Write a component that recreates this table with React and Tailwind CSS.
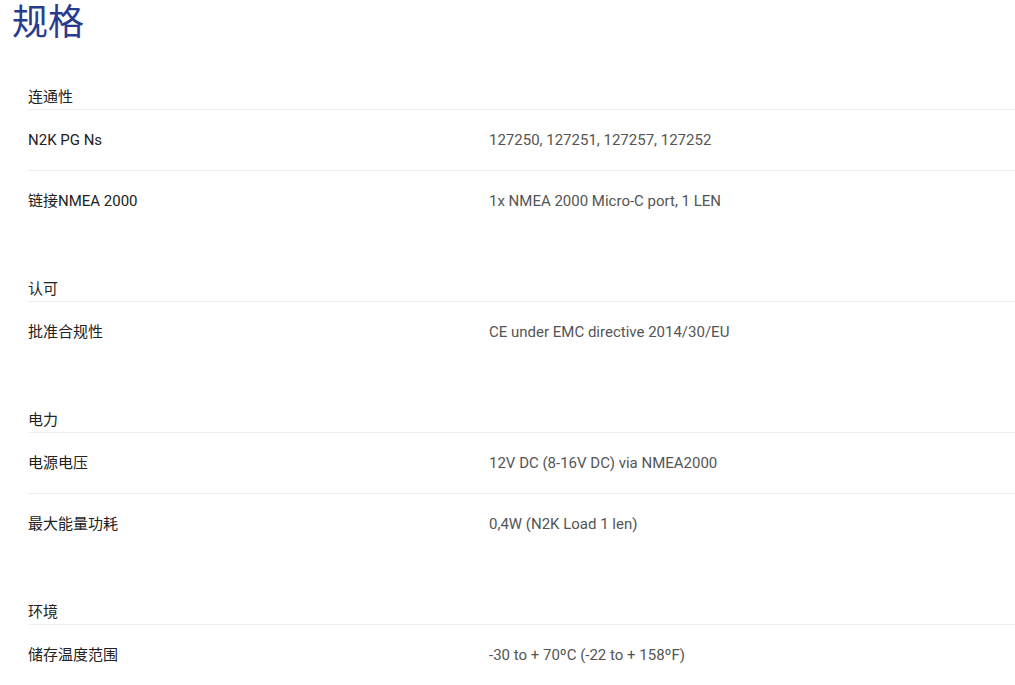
const sections = [
  {
    title: '连通性',
    rows: [
      ['N2K PG Ns', '127250, 127251, 127257, 127252'],
      ['链接NMEA 2000', '1x NMEA 2000 Micro-C port, 1 LEN'],
    ],
  },
  {
    title: '认可',
    rows: [['批准合规性', 'CE under EMC directive 2014/30/EU']],
  },
  {
    title: '电力',
    rows: [
      ['电源电压', '12V DC (8-16V DC) via NMEA2000'],
      ['最大能量功耗', '0,4W (N2K Load 1 len)'],
    ],
  },
  {
    title: '环境',
    rows: [['储存温度范围', '-30 to + 70ºC (-22 to + 158ºF)']],
  },
];

const App = () => {
  return (
    <div className="bg-white min-h-screen font-['Roboto','Noto_Sans_CJK_SC',sans-serif]">
      <h1 className="pl-3 pt-[1px] text-[36px] leading-[44px] text-[#283c8f]">规格</h1>

      <div className="pl-7 pt-[42px]">
        {sections.map((section) => (
          <div key={section.title} className="mb-[48px]">
            <div className="text-[15px] leading-5 text-[#222] pb-[2px] border-b border-[#eeeeee]">
              {section.title}
            </div>
            {section.rows.map(([label, value], i) =>
              i < section.rows.length - 1 ? (
                <div key={label} className="flex items-center h-[61px] text-[15px] border-b border-[#eeeeee]">
                  <div className="w-[461px] text-[#222]">{label}</div>
                  <div className="text-[#555]">{value}</div>
                </div>
              ) : (
                <div key={label} className="flex items-center h-[60px] text-[15px]">
                  <div className="w-[461px] text-[#222]">{label}</div>
                  <div className="text-[#555]">{value}</div>
                </div>
              )
            )}
          </div>
        ))}
      </div>
    </div>
  );
};

export default App;
